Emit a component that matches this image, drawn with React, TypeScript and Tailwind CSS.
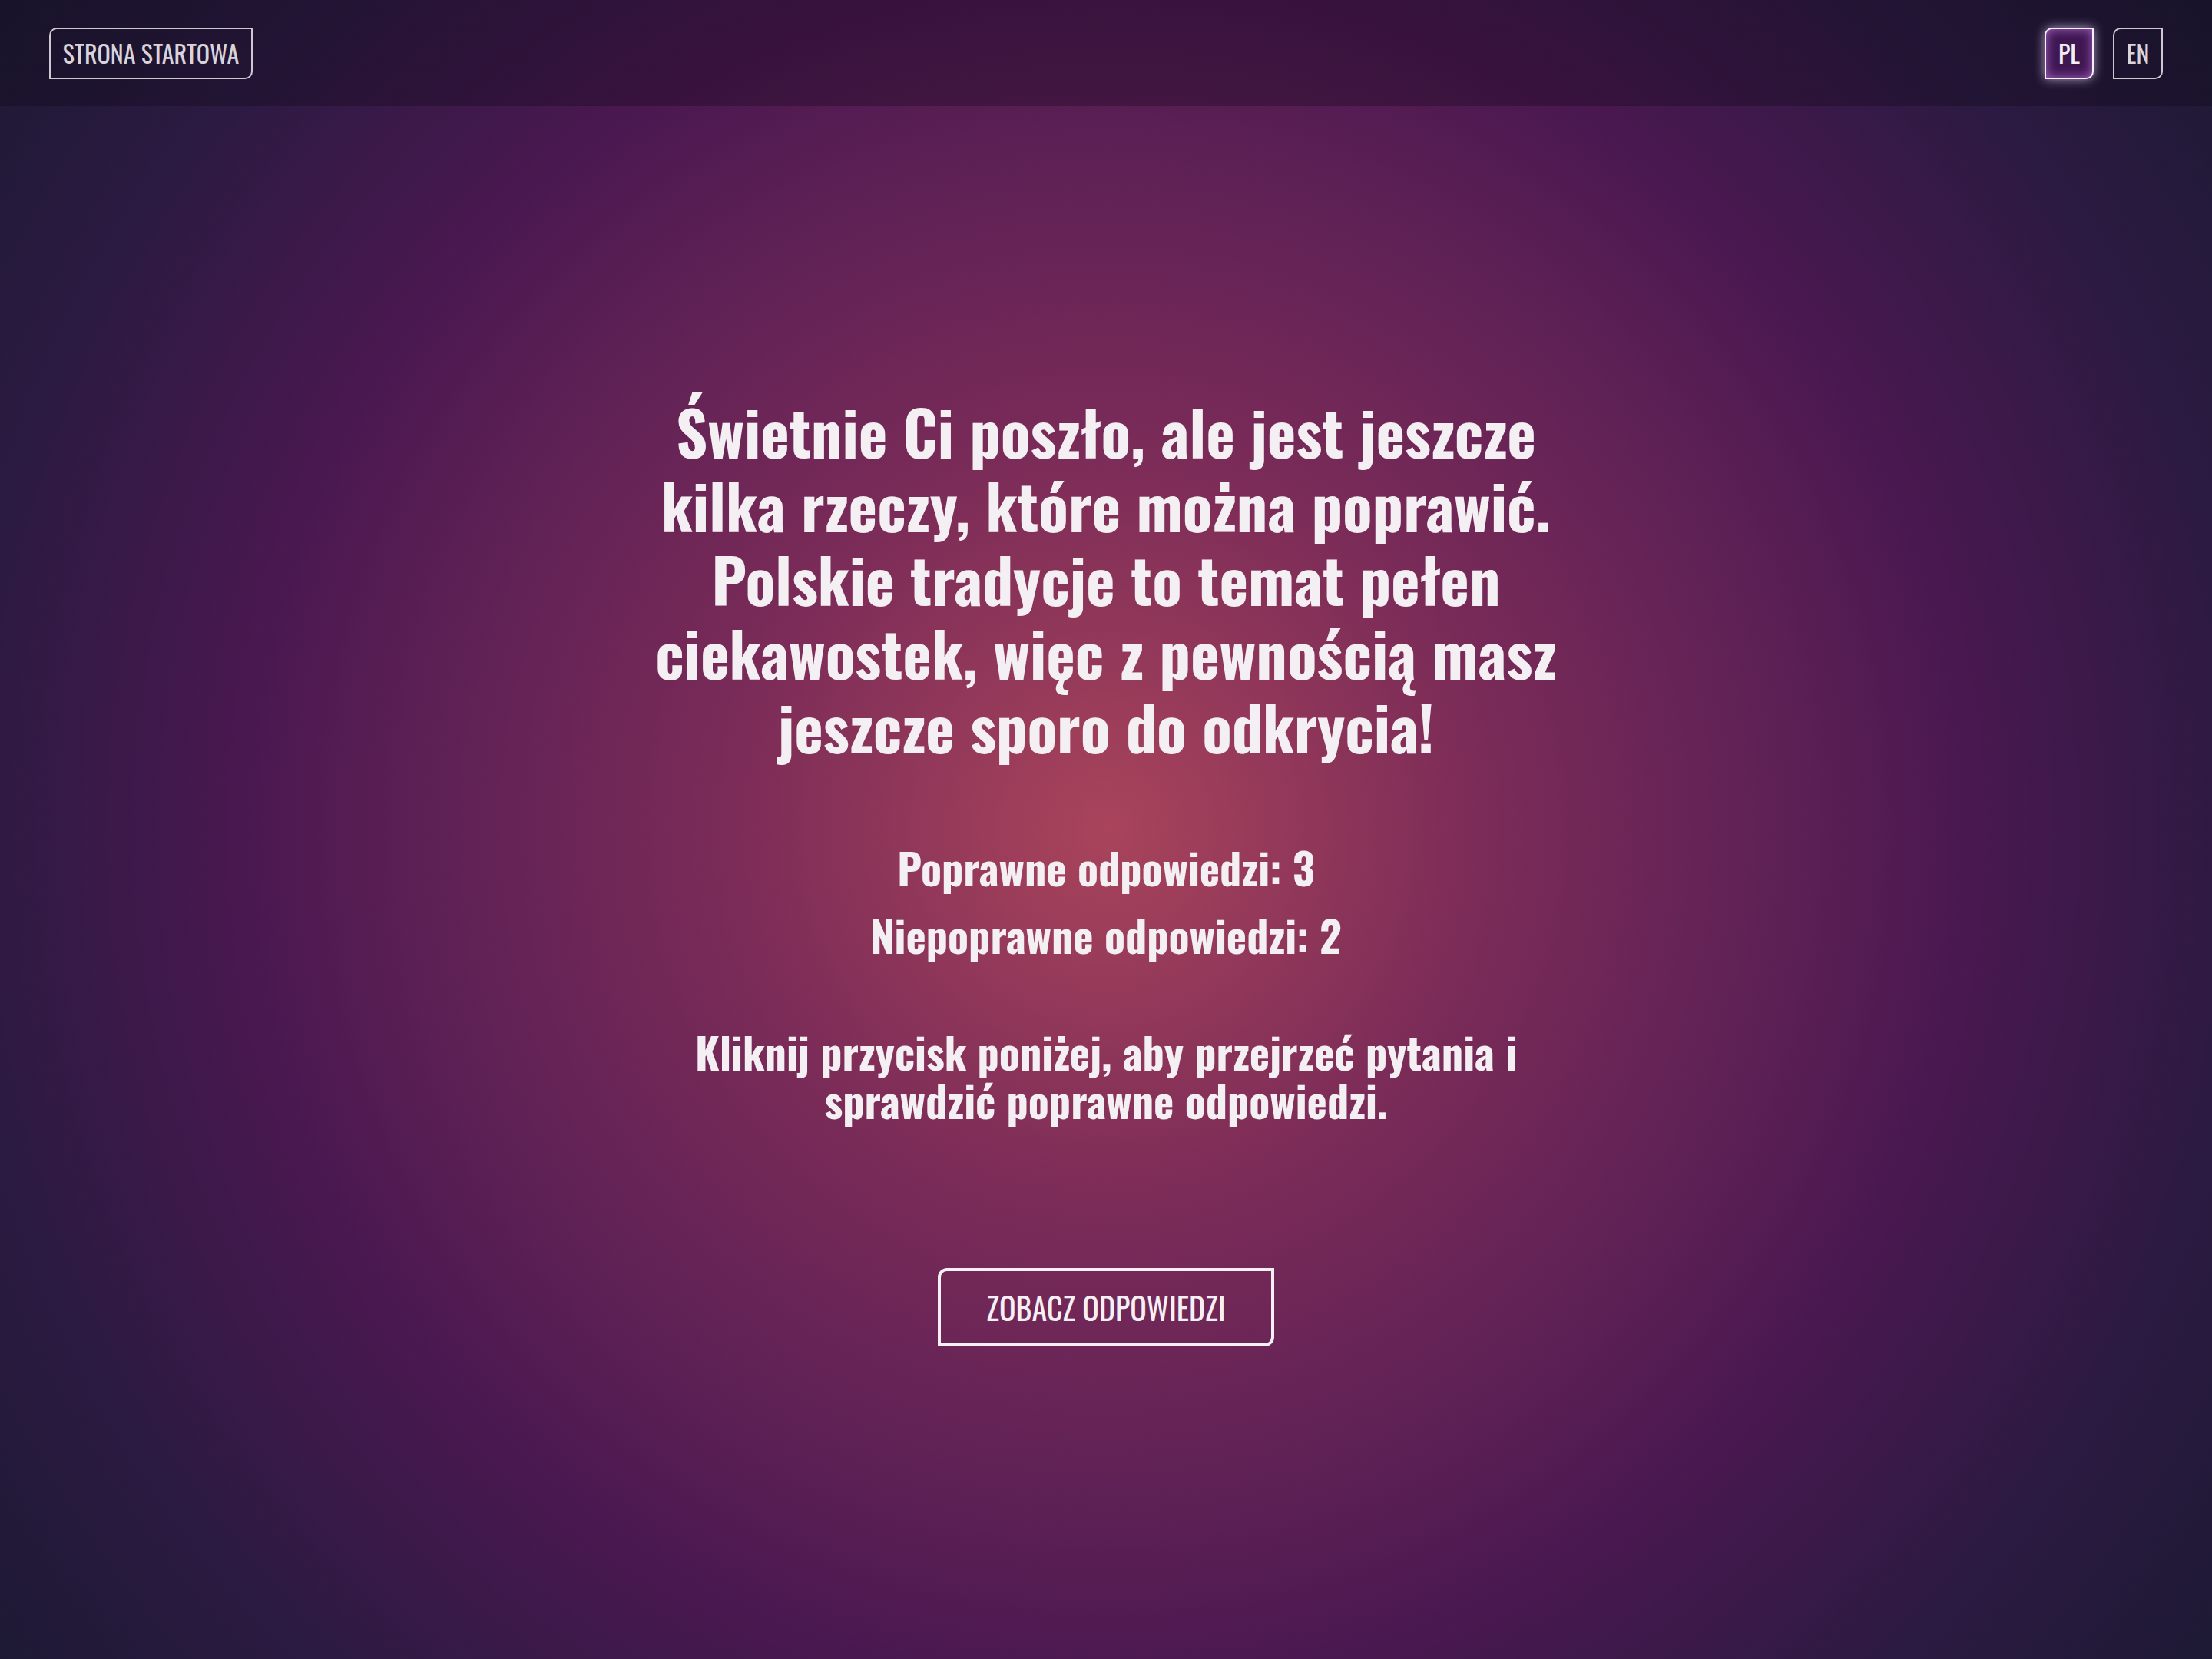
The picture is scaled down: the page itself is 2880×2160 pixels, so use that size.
import React from 'react';

const App: React.FC = () => {
  return (
    <div className="min-h-screen w-full bg-[radial-gradient(circle_at_50%_50%,#a9445b_0%,#7a2b58_28%,#5c2055_50%,#4a1850_62%,#2c1a42_82%,#1d1934_100%)] font-['Oswald','Roboto_Condensed',sans-serif] text-[#f4eff3]">
      <header className="flex h-[138px] items-center justify-between bg-[#0c0614]/30 px-[64px]">
        <button className="flex h-[67px] w-[265px] items-center justify-center rounded-tl-[10px] rounded-br-[10px] border-2 border-[#cfc8d3] text-[32px] uppercase leading-none text-[#d9d3dc]">
          Strona startowa
        </button>
        <div className="flex gap-[25px]">
          <button className="flex h-[67px] w-[64px] items-center justify-center rounded-tl-[10px] rounded-br-[10px] border-2 border-[#f6eefa] bg-[#3f1752] text-[32px] leading-none text-[#f4eff6] shadow-[0_0_14px_rgba(240,220,255,0.7),inset_0_0_14px_rgba(175,105,205,0.95)]">
            PL
          </button>
          <button className="flex h-[67px] w-[65px] items-center justify-center rounded-tl-[10px] rounded-br-[10px] border-2 border-[#cfc8d3] text-[32px] leading-none text-[#d9d3dc]">
            EN
          </button>
        </div>
      </header>

      <main className="flex flex-col items-center pt-[375px] pb-[300px] text-center">
        <h1 className="text-[80px] font-bold leading-[96px]">
          Świetnie Ci poszło, ale jest jeszcze
          <br />
          kilka rzeczy, które można poprawić.
          <br />
          Polskie tradycje to temat pełen
          <br />
          ciekawostek, więc z pewnością masz
          <br />
          jeszcze sporo do odkrycia!
        </h1>

        <div className="mt-[92px] flex flex-col text-[56px] font-bold leading-[88px]">
          <p>Poprawne odpowiedzi: 3</p>
          <p>Niepoprawne odpowiedzi: 2</p>
        </div>

        <p className="mt-[76px] text-[56px] font-bold leading-[63px]">
          Kliknij przycisk poniżej, aby przejrzeć pytania i
          <br />
          sprawdzić poprawne odpowiedzi.
        </p>

        <button className="mt-[188px] flex h-[102px] w-[438px] items-center justify-center rounded-tl-[12px] rounded-br-[12px] border-4 border-[#f6eff4] text-[40px] uppercase leading-none text-[#f6f0f4]">
          Zobacz odpowiedzi
        </button>
      </main>
    </div>
  );
};

export default App;
